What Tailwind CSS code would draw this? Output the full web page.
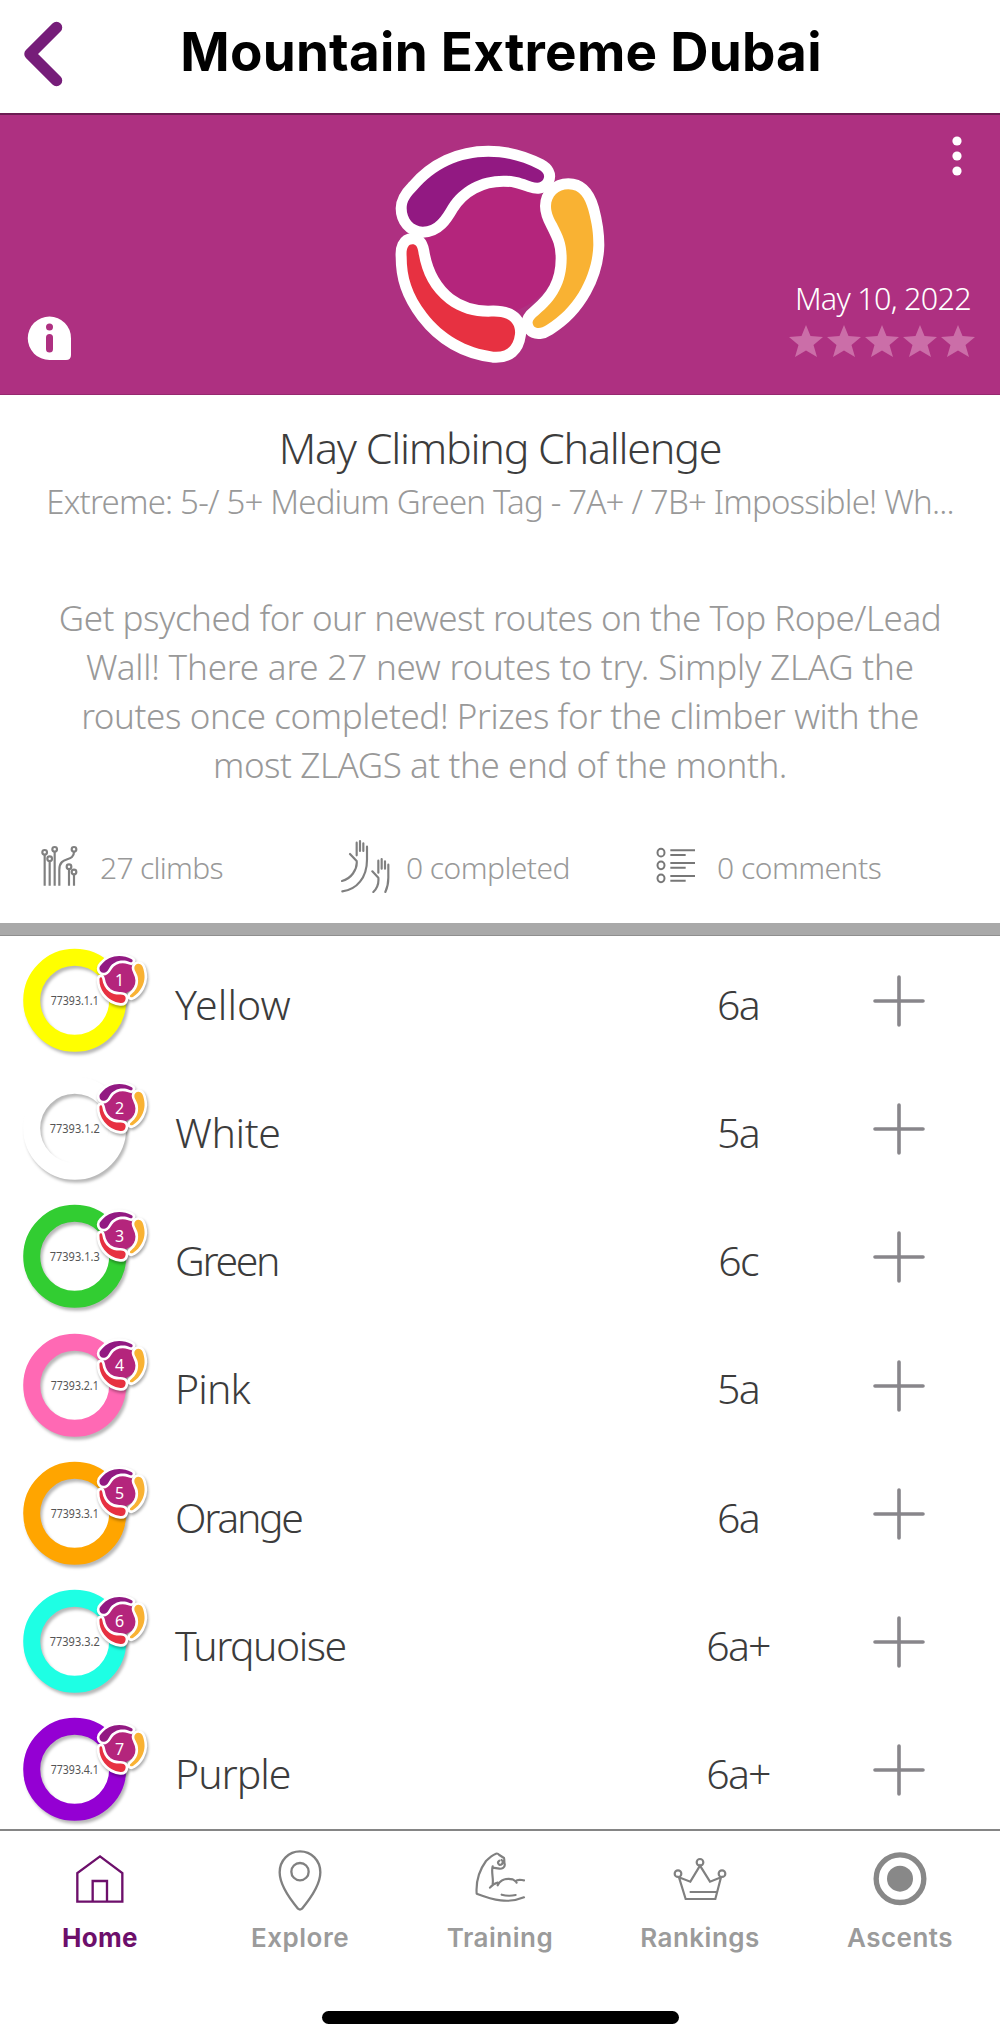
<!DOCTYPE html>
<html lang="en">
<head>
<meta charset="utf-8">
<meta name="viewport" content="width=device-width, initial-scale=1">
<title>Mountain Extreme Dubai</title>
<script src="https://cdn.jsdelivr.net/npm/@tailwindcss/browser@4"></script>
</head>
<body class="w-[1000px] h-[2044px] overflow-hidden bg-white font-['Noto_Sans',sans-serif] font-light">
<svg class="hidden">
  <symbol id="logo" viewBox="0 0 720 720">
    <circle cx="340" cy="348" r="205" fill="#b4257c"/>
    <g stroke="#fff" stroke-width="66" stroke-linejoin="round" fill="#fff">
      <path d="M80 235C80 215 90 200 110 180C165 115 240 80 325 80C380 80 430 95 475 118C490 126 496 136 490 148C484 160 470 160 455 155C420 143 405 137 370 137C300 137 240 170 205 225C185 260 165 290 128 290C100 290 80 265 80 235Z"/>
      <path d="M565 178C600 178 615 205 625 240C637 285 640 310 640 345C638 430 590 530 500 585C485 595 470 598 461 588C453 575 460 567 475 555C530 510 560 460 560 385C560 340 550 320 530 280C515 253 513 240 513 228C513 200 535 178 565 178Z"/>
      <path d="M97 343C108 343 112 350 115 365C125 430 150 480 200 520C240 550 280 560 325 560C350 558 365 560 380 566C398 575 407 590 405 612C400 650 380 668 340 665C260 655 190 615 140 550C95 490 80 440 80 380C78 355 85 343 97 343Z"/>
    </g>
    <path fill="#921982" d="M80 235C80 215 90 200 110 180C165 115 240 80 325 80C380 80 430 95 475 118C490 126 496 136 490 148C484 160 470 160 455 155C420 143 405 137 370 137C300 137 240 170 205 225C185 260 165 290 128 290C100 290 80 265 80 235Z"/>
    <path fill="#f9b233" d="M565 178C600 178 615 205 625 240C637 285 640 310 640 345C638 430 590 530 500 585C485 595 470 598 461 588C453 575 460 567 475 555C530 510 560 460 560 385C560 340 550 320 530 280C515 253 513 240 513 228C513 200 535 178 565 178Z"/>
    <path fill="#e73141" d="M97 343C108 343 112 350 115 365C125 430 150 480 200 520C240 550 280 560 325 560C350 558 365 560 380 566C398 575 407 590 405 612C400 650 380 668 340 665C260 655 190 615 140 550C95 490 80 440 80 380C78 355 85 343 97 343Z"/>
  </symbol>
  <symbol id="star" viewBox="0 0 34 32"><path fill="#cb6ea8" d="M17 0L21.500 11L34 12L24.500 20L28 32L17 25.500L6 32L9.500 20L0 12L12.500 11Z"/></symbol>
</svg>

<header class="flex h-[115px] items-center border-b-2 border-[#6b1d52] px-6">
  <svg class="mb-[6px] h-[66px] w-[40px]" viewBox="0 0 40 66" fill="none" stroke="#761d79" stroke-width="11.500" stroke-linecap="round" stroke-linejoin="round"><path d="M32.500 6.500L6 33L32.500 59.500"/></svg>
  <h1 class="mr-[38px] flex-1 whitespace-nowrap pb-[7px] text-center font-['Inter',sans-serif] text-[53px] font-bold tracking-[0.25px] text-black">Mountain Extreme Dubai</h1>
</header>

<section class="flex h-[280px] justify-between border-b border-[#96286f] bg-[#ae3081]">
  <div class="flex w-[380px] items-end pb-[33px] pl-[27px]">
    <svg class="size-[45px]" viewBox="0 0 45 45"><path fill="#fff" d="M22.500 0.500A21.500 21.500 0 0 1 44 22.500V39Q44 44 39 44H22.500A21.700 21.700 0 0 1 22.500 0.500Z"/><circle cx="22.500" cy="11" r="3.500" fill="#ae3081"/><path d="M22.500 21.500V33" stroke="#ae3081" stroke-width="7" stroke-linecap="round"/></svg>
  </div>
  <svg class="mt-[15px] size-[240px]"><use href="#logo"/></svg>
  <div class="flex w-[380px] flex-col items-end justify-between pb-[37px] pt-[21px]">
    <svg class="mr-[38px] h-[40px] w-[10px]" viewBox="0 0 10 40" fill="#fff"><circle cx="5" cy="5" r="4.600"/><circle cx="5" cy="20" r="4.600"/><circle cx="5" cy="35" r="4.600"/></svg>
    <div>
      <p class="mb-[3px] mr-[29px] whitespace-nowrap text-right text-[30.500px] leading-[48px] tracking-[-0.7px] text-white">May 10, 2022</p>
      <div class="mr-[25px] flex justify-end gap-[4px]">
        <svg class="h-[32px] w-[34px]"><use href="#star"/></svg><svg class="h-[32px] w-[34px]"><use href="#star"/></svg><svg class="h-[32px] w-[34px]"><use href="#star"/></svg><svg class="h-[32px] w-[34px]"><use href="#star"/></svg><svg class="h-[32px] w-[34px]"><use href="#star"/></svg>
      </div>
    </div>
  </div>
</section>

<section class="flex h-[528px] flex-col items-center whitespace-nowrap text-center text-[#999]">
  <h2 class="mt-[23px] text-[43px] leading-[60px] tracking-[-1.25px] text-[#3c3c3c]">May Climbing Challenge</h2>
  <p class="text-[33px] leading-[48px] tracking-[-0.8px]">Extreme: 5-/ 5+ Medium Green Tag - 7A+ / 7B+ Impossible! Wh...</p>
  <div class="mt-[67px] text-[35px] leading-[49px]">
    <p class="tracking-[-0.48px]">Get psyched for our newest routes on the Top Rope/Lead</p>
    <p class="tracking-[-0.18px]">Wall! There are 27 new routes to try. Simply ZLAG the</p>
    <p class="tracking-[-0.4px]">routes once completed! Prizes for the climber with the</p>
    <p class="tracking-[-0.42px]">most ZLAGS at the end of the month.</p>
  </div>
  <div class="mt-[47px] flex h-[60px] w-full items-center pl-[41px] text-left text-[30px] tracking-[-0.7px]">
    <svg class="h-[54px] w-[37px] shrink-0" viewBox="123 56 111 162" fill="none" stroke="#808080" stroke-width="6.500"><circle cx="134" cy="96" r="7"/><circle cx="149" cy="115" r="7"/><circle cx="164" cy="87" r="7"/><circle cx="222" cy="87" r="7"/><circle cx="207" cy="139" r="7"/><circle cx="222" cy="155" r="7"/><path d="M134 103V196M149 122V196M164 94V196M207 146V196M222 162V196M222 94C222 128 178 105 178 148V196"/></svg>
    <span class="ml-[22px] w-[241px] pt-[2px]">27 climbs</span>
    <svg class="h-[54px] w-[50px] shrink-0" viewBox="1023 56 150 162" fill="none" stroke="#808080" stroke-width="6.500" stroke-linecap="round" stroke-linejoin="round"><path d="M1070 105V67M1080 92V62M1090 92V69M1050 101L1070 122C1073 148 1052 176 1026 182M1101 79V118C1101 172 1070 208 1027 213M1135 157V121M1145 145V116M1155 145V123M1117 153L1135 172C1137 190 1130 205 1120 215M1165 133V172C1165 190 1162 202 1156 215"/></svg>
    <span class="ml-[15px] w-[250px] pt-[2px] tracking-[-0.55px]">0 completed</span>
    <svg class="h-[54px] w-[40px] shrink-0" viewBox="650 56 120 162" fill="none" stroke="#777" stroke-width="6"><ellipse cx="665" cy="97" rx="10.500" ry="11.500"/><ellipse cx="665" cy="135" rx="10.500" ry="11.500"/><ellipse cx="665" cy="174" rx="10.500" ry="11.500"/><path d="M693 90H767M693 104H739M693 128H767M693 142H739M693 167H767M693 181H739"/></svg>
    <span class="ml-[21px] pt-[2px] tracking-[-0.5px]">0 comments</span>
  </div>
</section>
<div class="h-[13px] border-b border-[#8f8f8f] bg-[#a9a9a9]"></div>

<main id="list" class="h-[893px] overflow-hidden"></main>

<nav class="flex h-[215px] flex-col items-center border-t-2 border-[#858585] font-['Inter',sans-serif]">
  <div class="grid w-full grid-cols-5 pt-[15px] text-center text-[26px] font-semibold leading-[36px] text-[#9b9b9b]">
    <div class="flex flex-col items-center gap-[8px] text-[#6d0f6b]">
      <svg class="h-[66px] w-[60px]" viewBox="211 78 180 198" fill="none" stroke="#6d0f6b" stroke-width="7"><path d="M233 245V159L301 109L368 159V245ZM279 244V183H322V244"/></svg>
      <span class="font-bold tracking-[0.3px]">Home</span>
    </div>
    <div class="flex flex-col items-center gap-[8px]">
      <svg class="h-[66px] w-[60px]" viewBox="807 78 180 198" fill="none" stroke="#808080" stroke-width="7"><circle cx="897" cy="155" r="26"/><path d="M897 94C931 94 958 121 958 157C958 191 934 229 903 266Q897 271 891 266C860 229 836 191 836 157C836 121 863 94 897 94Z"/></svg>
      <span class="tracking-[0.5px]">Explore</span>
    </div>
    <div class="flex flex-col items-center gap-[8px]">
      <svg class="h-[66px] w-[60px]" viewBox="-30 78 180 198" fill="none" stroke="#808080" stroke-width="6.500" stroke-linecap="round" stroke-linejoin="round"><path d="M132 232C85 252 40 240 -10 221C-13 180 2 145 18 123C28 113 38 105 48 101Q53 99 58 105L72 114C74 120 72 125 74 132C76 143 65 147 58 146L38 143M38 139C33 155 41 175 38 192M30 203C36 196 42 190 53 188M53 196C60 180 78 174 98 178C105 182 109 184 110 188M106 184C114 176 122 180 132 181M65 224Q85 230 107 225M58 122C50 126 56 138 63 134C70 131 69 123 65 120"/></svg>
      <span class="tracking-[0.5px]">Training</span>
    </div>
    <div class="flex flex-col items-center gap-[8px]">
      <svg class="h-[66px] w-[60px]" viewBox="570 78 180 198" fill="none" stroke="#808080" stroke-width="6.500"><circle cx="660" cy="127" r="10"/><circle cx="594" cy="161" r="10"/><circle cx="726" cy="161" r="10"/><path d="M597 172L617 237H706L723 172L690 185L660 137L631 185ZM629 216H710"/></svg>
      <span class="tracking-[0.5px]">Rankings</span>
    </div>
    <div class="flex flex-col items-center gap-[8px]">
      <svg class="h-[66px] w-[60px]" viewBox="1168 78 180 198"><circle cx="1258" cy="176" r="71.500" fill="none" stroke="#888" stroke-width="16"/><circle cx="1258" cy="176" r="39" fill="#888"/></svg>
      <span class="tracking-[0.5px]">Ascents</span>
    </div>
  </div>
  <div class="mt-[55px] h-[13px] w-[357px] rounded-full bg-black"></div>
</nav>

<script>
// name, grade, hold colour, tag, name tracking
const climbs = [
  ["Yellow", "6a", "#ffff00", "77393.1.1", 0.1],
  ["White", "5a", "#ffffff", "77393.1.2", -0.4],
  ["Green", "6c", "#32cd32", "77393.1.3", -2.3],
  ["Pink", "5a", "#ff69b4", "77393.2.1", -0.9],
  ["Orange", "6a", "#ffa500", "77393.3.1", -2.3],
  ["Turquoise", "6a+", "#1effe4", "77393.3.2", -1.5],
  ["Purple", "6a+", "#9400d3", "77393.4.1", -1],
];
document.getElementById("list").innerHTML = climbs.map(([name, grade, color, tag, ls], i) => `
  <div class="grid h-[128.200px] grid-cols-[175px_463px_200px_162px] items-center text-[41px] text-[#3c3c3c]">
    <div class="relative h-full">
      <svg class="absolute left-0 top-0 h-[128px] w-[160px]" viewBox="0 0 160 128">
        <g fill="none" stroke-width="17" style="filter:drop-shadow(2px 3px 1.500px rgb(0 0 0 / .28))"><circle cx="74.700" cy="64.300" r="43" stroke="${color}"/></g>
        <text x="74.700" y="69.300" text-anchor="middle" font-size="13" textLength="${tag.endsWith(".1") ? 48 : 50}" lengthAdjust="spacingAndGlyphs" fill="#555" font-weight="400">${tag}</text>
        <g style="filter:drop-shadow(1.500px 2px 1.500px rgb(0 0 0 / .35))"><use href="#logo" x="93" y="13.500" width="58" height="58"/></g>
        <text x="119.500" y="49.700" text-anchor="middle" font-size="16" fill="#fff" font-weight="400">${i + 1}</text>
      </svg>
    </div>
    <span class="pt-[9px]" style="letter-spacing:${ls}px">${name}</span>
    <span class="pt-[9px] text-center tracking-[-1.800px]">${grade}</span>
    <svg class="ml-[35px] mt-[2px] size-[52px]" viewBox="0 0 52 52" stroke="#88868b" stroke-width="3.600" stroke-linecap="round"><path d="M26 2V50M2 26H50"/></svg>
  </div>`).join("");
</script>
</body>
</html>
